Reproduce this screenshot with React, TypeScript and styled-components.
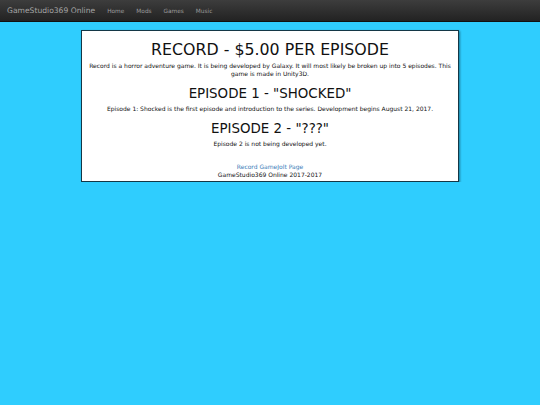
import React from "react";
import styled, { createGlobalStyle } from "styled-components";

const GlobalStyle = createGlobalStyle`
  html, body {
    margin: 0;
    padding: 0;
    background: #2fcdfe;
    font-family: "DejaVu Sans", Verdana, sans-serif;
  }
`;

const Navbar = styled.div`
  height: 22px;
  background: linear-gradient(#3d3d3d, #222222);
  border-bottom: 1px solid #111;
  display: flex;
  align-items: center;
  padding: 0 7px;
  box-sizing: border-box;
`;

const Brand = styled.a`
  color: #a5a5a5;
  font-size: 7.6px;
  margin-right: 12px;
  text-decoration: none;
`;

const NavLink = styled.a`
  color: #9d9d9d;
  font-size: 5.8px;
  margin-right: 12px;
  text-decoration: none;
`;

const Page = styled.div`
  display: flex;
  justify-content: center;
  padding-top: 8px;
`;

const Box = styled.div`
  width: 378px;
  box-sizing: border-box;
  background: #fff;
  border: 1px solid #143746;
  box-shadow: 1px 1px 2px rgba(0, 0, 0, 0.4);
  text-align: center;
  padding: 8.5px 4px 1px;
  color: #111;
`;

const Title = styled.h1<{ $size: number; $mb?: number }>`
  font-weight: normal;
  font-size: ${(p) => p.$size}px;
  margin: 0 0 ${(p) => p.$mb ?? 0}px;
  line-height: 1.25;
  color: #111;
`;

const Text = styled.p`
  font-size: 6px;
  line-height: 8px;
  margin: 2px 0 8.5px;
`;

const Footer = styled.div`
  margin-top: 14.5px;
  font-size: 6px;
  line-height: 8.5px;
`;

const FooterLink = styled.a`
  display: block;
  color: #3a7db8;
  text-decoration: none;
`;

export default function App() {
  return (
    <>
      <GlobalStyle />
      <Navbar>
        <Brand>GameStudio369 Online</Brand>
        <NavLink>Home</NavLink>
        <NavLink>Mods</NavLink>
        <NavLink>Games</NavLink>
        <NavLink>Music</NavLink>
      </Navbar>
      <Page>
        <Box>
          <Title $size={15.8} $mb={2.5}>RECORD - $5.00 PER EPISODE</Title>
          <Text>
            Record is a horror adventure game. It is being developed by Galaxy. It will most likely be broken up into 5
            episodes. This game is made in Unity3D.
          </Text>
          <Title $size={13.4}>EPISODE 1 - "SHOCKED"</Title>
          <Text>
            Episode 1: Shocked is the first episode and introduction to the series. Development begins August 21, 2017.
          </Text>
          <Title $size={13.4}>EPISODE 2 - "???"</Title>
          <Text>Episode 2 is not being developed yet.</Text>
          <Footer>
            <FooterLink>Record GameJolt Page</FooterLink>
            GameStudio369 Online 2017-2017
          </Footer>
        </Box>
      </Page>
    </>
  );
}
